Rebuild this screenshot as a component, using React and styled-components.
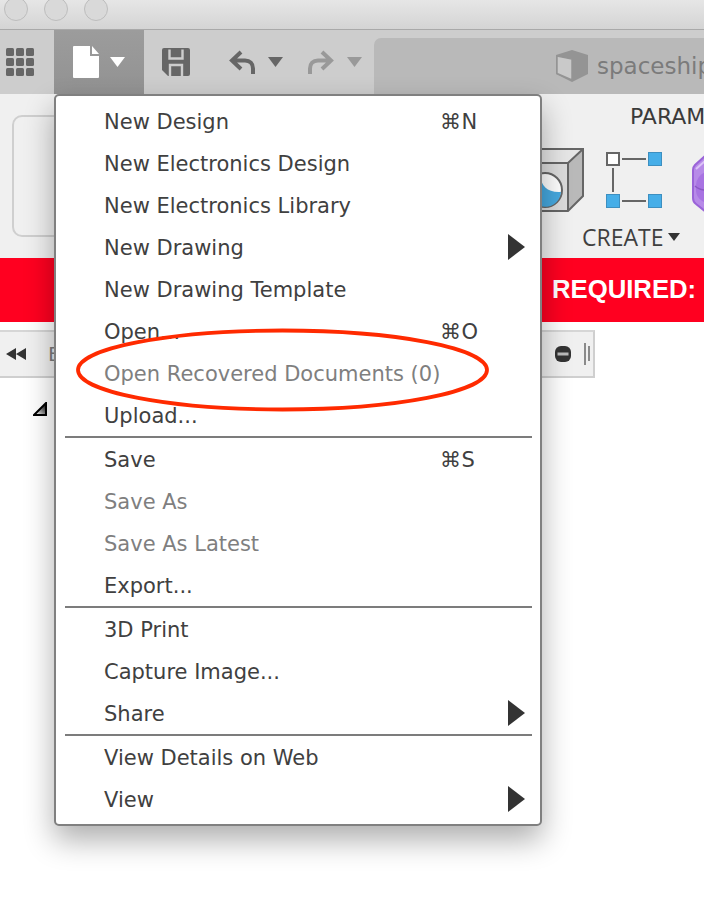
import React from 'react';
import styled, { createGlobalStyle } from 'styled-components';

const GlobalStyle = createGlobalStyle`
  html, body { margin: 0; padding: 0; background: #fff; }
  body { font-family: "DejaVu Sans", "Liberation Sans", sans-serif; }
`;

const Page = styled.div`
  position: relative;
  width: 704px;
  height: 918px;
  overflow: hidden;
  background: #fff;
`;

const TitleBar = styled.div`
  height: 29px;
  display: flex;
  gap: 16px;
  padding-left: 4px;
  background: linear-gradient(#e6e6e6, #d4d4d4);
  border-bottom: 1px solid #a9a9a9;
`;

const Light = styled.span`
  width: 22px;
  height: 22px;
  margin-top: -3px;
  border-radius: 50%;
  border: 1px solid #bdbdbd;
  background: #d9d9d9;
`;

const Toolbar = styled.div`
  height: 64px;
  display: flex;
  align-items: center;
  background: #cdcdcd;
`;

const GridButton = styled.div`
  width: 54px;
  padding-left: 6px;
  box-sizing: border-box;
  display: flex;
`;

const FileButton = styled.div`
  width: 90px;
  height: 64px;
  display: flex;
  align-items: center;
  gap: 11px;
  padding-left: 19px;
  box-sizing: border-box;
  background: linear-gradient(#9c9c9c, #929292);
`;

const ToolIcon = styled.div`
  display: flex;
  margin-left: ${p => p.$left || 0}px;
`;

const Tab = styled.div`
  flex: 1;
  align-self: flex-end;
  height: 56px;
  margin-left: 12px;
  display: flex;
  align-items: center;
  gap: 9px;
  padding-left: 182px;
  overflow: hidden;
  background: #b9b9b9;
  border-top-left-radius: 7px;

  svg { flex-shrink: 0; }
`;

const TabTitle = styled.span`
  font-size: 23px;
  color: #7b7b7b;
  white-space: nowrap;
`;

const Ribbon = styled.div`
  height: 164px;
  display: flex;
  background: #f0f0f0;
`;

const EmptyTool = styled.div`
  width: 120px;
  height: 118px;
  margin: 21px 0 0 12px;
  border: 2px solid #cfcfcf;
  border-radius: 10px;
  flex-shrink: 0;
`;

const RibbonGroup = styled.div`
  flex: 1;
  display: flex;
  flex-direction: column;
  padding-left: 404px;
  min-width: 0;
  overflow: hidden;
`;

const GroupTitle = styled.div`
  margin: 11px 0 0 90px;
  height: 24px;
  font-size: 22px;
  line-height: 24px;
  color: #3a3a3a;
  white-space: nowrap;
`;

const RibbonIcons = styled.div`
  display: flex;
  align-items: flex-start;
  margin-top: 19px;
  height: 68px;

  svg { flex-shrink: 0; }
`;

const SketchSlot = styled.div`
  display: flex;
  margin-top: 4px;
`;

const SolidSlot = styled.div`
  display: flex;
  margin: 7px 0 0 30px;
`;

const CreateLabel = styled.div`
  display: flex;
  align-items: center;
  gap: 5px;
  margin: 8px 0 0 42px;
  font-size: 23px;
  line-height: 26px;
  color: #3f3f3f;
  font-family: "Open Sans", "DejaVu Sans", sans-serif;
`;

const Banner = styled.div`
  height: 64px;
  box-sizing: border-box;
  display: flex;
  align-items: center;
  padding: 0 0 2px 552px;
  overflow: hidden;
  white-space: nowrap;
  background: #ff0020;
  color: #fff;
  font-family: "Liberation Sans", Arial, sans-serif;
  font-weight: 700;
  font-size: 25.700px;
`;

const BrowserStrip = styled.div`
  width: 595px;
  height: 48px;
  margin-top: 8px;
  box-sizing: border-box;
  display: flex;
  align-items: center;
  padding: 0 3px 0 6px;
  background: #f0f0f0;
  border-top: 2px solid #d6d6d6;
  border-bottom: 2px solid #cfcfcf;
  border-right: 2px solid #cfcfcf;
`;

const StripLetter = styled.span`
  margin-left: 22px;
  font-size: 20px;
  color: #7d7d7d;
`;

const StripEnd = styled.div`
  margin-left: auto;
  display: flex;
  align-items: center;
  gap: 13px;
`;

const TreeRow = styled.div`
  padding: 24px 0 0 33px;
  display: flex;
`;

const Menu = styled.div`
  position: absolute;
  left: 54px;
  top: 94px;
  width: 488px;
  box-sizing: border-box;
  padding: 4px 0 4px;
  background: #fff;
  border: 2px solid #808080;
  border-radius: 5px;
  box-shadow: 0 14px 30px rgba(0, 0, 0, 0.32);
`;

const MenuRow = styled.div`
  height: 42px;
  box-sizing: border-box;
  display: flex;
  align-items: center;
  padding: 2px 15px 0 48px;
  font-size: 21px;
  color: ${p => (p.$disabled ? '#7f7f7f' : '#404040')};
  white-space: nowrap;
`;

const Shortcut = styled.span`
  margin-left: auto;
  margin-right: 47px;
  width: 38px;
  letter-spacing: 0.500px;
`;

const Arrow = styled.svg`
  margin: -2px 0 0 auto;
  flex-shrink: 0;
`;

const Separator = styled.div`
  height: 2px;
  margin: 0 8px 0 9px;
  background: #7c7c7c;
`;

const Annotation = styled.svg`
  position: absolute;
  left: 70px;
  top: 322px;
  pointer-events: none;
`;

const menuGroups = [
  [
    { label: 'New Design', keys: '⌘N' },
    { label: 'New Electronics Design' },
    { label: 'New Electronics Library' },
    { label: 'New Drawing', sub: true },
    { label: 'New Drawing Template' },
    { label: 'Open...', keys: '⌘O' },
    { label: 'Open Recovered Documents (0)', disabled: true },
    { label: 'Upload...' },
  ],
  [
    { label: 'Save', keys: '⌘S' },
    { label: 'Save As', disabled: true },
    { label: 'Save As Latest', disabled: true },
    { label: 'Export...' },
  ],
  [
    { label: '3D Print' },
    { label: 'Capture Image...' },
    { label: 'Share', sub: true },
  ],
  [
    { label: 'View Details on Web' },
    { label: 'View', sub: true },
  ],
];

const Caret = ({ color, w = 15, h = 10 }) => (
  <svg width={w} height={h} viewBox="0 0 15 10"><path d="M0 0h15L7.5 10z" fill={color} /></svg>
);

const GridIcon = () => (
  <svg width="28" height="28" viewBox="0 0 28 28" fill="#666">
    {[0, 10, 20].map(y => [0, 10, 20].map(x => (
      <rect key={`${x}-${y}`} x={x} y={y} width="8" height="8" rx="1.5" />
    )))}
  </svg>
);

const FileIcon = () => (
  <svg width="26" height="32" viewBox="0 0 26 32" fill="#fff">
    <path d="M1 0h16v10h9v21a1 1 0 0 1-1 1H1a1 1 0 0 1-1-1V1a1 1 0 0 1 1-1z" />
    <path d="M19 0l7 8h-7z" />
  </svg>
);

const SaveIcon = () => (
  <svg width="28" height="28" viewBox="0 0 28 28">
    <path d="M2 0h24a2 2 0 0 1 2 2v24a2 2 0 0 1-2 2H6l-6-6V2a2 2 0 0 1 2-2z" fill="#666" />
    <path d="M7.500 1.500v9h13v-9M8 28v-11h12v11" fill="none" stroke="#cdcdcd" strokeWidth="2.400" />
  </svg>
);

const UndoIcon = ({ color, flip }) => (
  <svg width="27" height="24" viewBox="0 0 27 24" style={flip ? { transform: 'scaleX(-1)' } : undefined}>
    <path d="M12 2L3 10.500 12 19M3 10.500h13c5 0 8 3 8 8V24" fill="none" stroke={color} strokeWidth="4" />
  </svg>
);

const CubeIcon = () => (
  <svg width="32" height="32" viewBox="0 0 32 32">
    <path d="M0 5L16 0l16 5v19L16 32 0 24z" fill="#949494" />
    <path d="M1 6l15 3v21L1 23.500z" fill="#c9c9c9" stroke="#949494" strokeWidth="1.500" />
  </svg>
);

const BoxIcon = () => (
  <svg width="66" height="64" viewBox="0 0 66 64">
    <path d="M0 1h43L28 15H0z" fill="#e6e6e6" />
    <path d="M0 15h28v48H0z" fill="#dcdcdc" />
    <path d="M28 15L43 1v47L28 63z" fill="#b9b9b9" />
    <path d="M0 1h43v47L28 63H0M0 15h28l15-14M28 15v48" fill="none" stroke="#666" strokeWidth="2" />
    <circle cx="5" cy="42" r="17" fill="#fff" stroke="#666" strokeWidth="2" />
    <path d="M0 27c1 11 8 18 21 17a16 16 0 0 1-21 14z" fill="#46a9e0" />
  </svg>
);

const SketchIcon = () => (
  <svg width="56" height="56" viewBox="0 0 56 56">
    <rect x="1" y="1" width="12" height="12" fill="#fff" stroke="#666" strokeWidth="2" />
    <rect x="42.500" y="0.500" width="13" height="13" fill="#46aee8" stroke="#3d8fc0" />
    <rect x="0.500" y="42.500" width="13" height="13" fill="#46aee8" stroke="#3d8fc0" />
    <rect x="42.500" y="42.500" width="13" height="13" fill="#46aee8" stroke="#3d8fc0" />
    <path d="M16 7h24M16 49h24M7 16v24" stroke="#666" strokeWidth="2" />
  </svg>
);

const SolidIcon = () => (
  <svg width="14" height="58" viewBox="0 0 14 58">
    <path d="M14 0L3 10Q1 12 1 15v28Q1 47 4 49l10 8z" fill="#b78ae8" stroke="#9a63d8" strokeWidth="2" />
    <path d="M4 14L14 5" fill="none" stroke="#dcc3f7" strokeWidth="2" />
    <path d="M14 17a14 14 0 0 0-10 13v5c0 7 5 11 10 13z" fill="#a873e2" />
    <path d="M3 31c3 3 7 4 11 4" fill="none" stroke="#8a58c4" strokeWidth="1.500" />
  </svg>
);

const RewindIcon = () => (
  <svg width="20" height="12" viewBox="0 0 20 12" fill="#333">
    <path d="M0 6l10-6v12zM10 6l10-6v12z" />
  </svg>
);

const StopIcon = () => (
  <svg width="16" height="16" viewBox="0 0 16 16">
    <rect width="16" height="16" rx="6" fill="#333" />
    <rect x="2.500" y="6.500" width="11" height="3" fill="#bbb" />
  </svg>
);

const GripIcon = () => (
  <svg width="6" height="22" viewBox="0 0 6 22" fill="#8a8a8a">
    <rect width="2" height="22" />
    <rect x="4" y="3" width="2" height="15" />
  </svg>
);

const ExpandIcon = () => (
  <svg width="14" height="14" viewBox="0 0 14 14">
    <defs>
      <linearGradient id="expand" x1="0.3" y1="1" x2="1" y2="0.300">
        <stop offset="0" stopColor="#eee" />
        <stop offset="1" stopColor="#222" />
      </linearGradient>
    </defs>
    <path d="M1 13L13 1v12z" fill="url(#expand)" stroke="#000" strokeWidth="2" />
  </svg>
);

const App = () => (
  <Page>
    <GlobalStyle />
    <TitleBar>
      <Light />
      <Light />
      <Light />
    </TitleBar>
    <Toolbar>
      <GridButton><GridIcon /></GridButton>
      <FileButton>
        <FileIcon />
        <Caret color="#fff" />
      </FileButton>
      <ToolIcon $left={18}><SaveIcon /></ToolIcon>
      <ToolIcon $left={39}><UndoIcon color="#666" /></ToolIcon>
      <ToolIcon $left={12}><Caret color="#666" /></ToolIcon>
      <ToolIcon $left={24}><UndoIcon color="#999" flip /></ToolIcon>
      <ToolIcon $left={13}><Caret color="#999" /></ToolIcon>
      <Tab>
        <CubeIcon />
        <TabTitle>spaceship</TabTitle>
      </Tab>
    </Toolbar>
    <Ribbon>
      <EmptyTool />
      <RibbonGroup>
        <GroupTitle>PARAM</GroupTitle>
        <RibbonIcons>
          <BoxIcon />
          <SketchSlot><SketchIcon /></SketchSlot>
          <SolidSlot><SolidIcon /></SolidSlot>
        </RibbonIcons>
        <CreateLabel>CREATE <Caret color="#333" w={12} h={8} /></CreateLabel>
      </RibbonGroup>
    </Ribbon>
    <Banner>REQUIRED:</Banner>
    <BrowserStrip>
      <RewindIcon />
      <StripLetter>B</StripLetter>
      <StripEnd>
        <StopIcon />
        <GripIcon />
      </StripEnd>
    </BrowserStrip>
    <TreeRow><ExpandIcon /></TreeRow>

    <Menu>
      {menuGroups.map((group, i) => (
        <React.Fragment key={i}>
          {i > 0 && <Separator />}
          {group.map(item => (
            <MenuRow key={item.label} $disabled={item.disabled}>
              {item.label}
              {item.keys && <Shortcut>{item.keys}</Shortcut>}
              {item.sub && (
                <Arrow width="17" height="26" viewBox="0 0 17 26">
                  <path d="M0 0l17 13L0 26z" fill="#333" />
                </Arrow>
              )}
            </MenuRow>
          ))}
        </React.Fragment>
      ))}
    </Menu>

    <Annotation width="426" height="96" viewBox="0 0 426 96">
      <ellipse cx="212.500" cy="48" rx="204.500" ry="39.500" fill="none" stroke="#ff2a00" strokeWidth="3.800" />
    </Annotation>
  </Page>
);

export default App;
